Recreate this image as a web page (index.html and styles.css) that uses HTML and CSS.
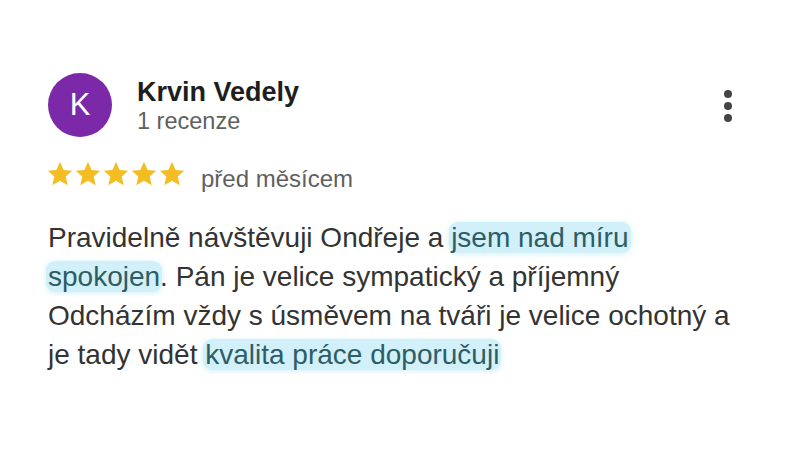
FILE: index.html
```html
<!DOCTYPE html>
<html lang="cs">
<head>
<meta charset="utf-8">
<link rel="stylesheet" href="styles.css">
</head>
<body>
<div class="review">
  <div class="header">
    <div class="avatar">K</div>
    <div class="who">
      <div class="name">Krvin Vedely</div>
      <div class="count">1 recenze</div>
    </div>
    <div class="more">
      <span class="dot"></span><span class="dot"></span><span class="dot"></span>
    </div>
  </div>
  <div class="meta">
    <div class="stars">
      <svg viewBox="0 0 24 24"><path d="M12 1.6l3.1 6.9 7.4.7-5.6 5 1.7 7.4L12 17.8l-6.6 3.8 1.7-7.4-5.6-5 7.4-.7z"/></svg>
      <svg viewBox="0 0 24 24"><path d="M12 1.6l3.1 6.9 7.4.7-5.6 5 1.7 7.4L12 17.8l-6.6 3.8 1.7-7.4-5.6-5 7.4-.7z"/></svg>
      <svg viewBox="0 0 24 24"><path d="M12 1.6l3.1 6.9 7.4.7-5.6 5 1.7 7.4L12 17.8l-6.6 3.8 1.7-7.4-5.6-5 7.4-.7z"/></svg>
      <svg viewBox="0 0 24 24"><path d="M12 1.6l3.1 6.9 7.4.7-5.6 5 1.7 7.4L12 17.8l-6.6 3.8 1.7-7.4-5.6-5 7.4-.7z"/></svg>
      <svg viewBox="0 0 24 24"><path d="M12 1.6l3.1 6.9 7.4.7-5.6 5 1.7 7.4L12 17.8l-6.6 3.8 1.7-7.4-5.6-5 7.4-.7z"/></svg>
    </div>
    <span class="when">před měsícem</span>
  </div>
  <p class="text">Pravidelně návštěvuji Ondřeje a <span class="hl">jsem nad míru spokojen</span>. Pán je velice sympatický a příjemný Odcházím vždy s úsměvem na tváři je velice ochotný a je tady vidět <span class="hl">kvalita práce doporučuji</span></p>
</div>
</body>
</html>
```
FILE: styles.css
```css
html, body {
  margin: 0;
  background: #ffffff;
}
body {
  font-family: "Liberation Sans", Arial, sans-serif;
  color: #333333;
}
.review {
  padding: 73px 48px 0 48px;
  width: 704px;
}
.header {
  display: flex;
  align-items: flex-start;
  gap: 25px;
}
.avatar {
  width: 64px;
  height: 64px;
  border-radius: 50%;
  background: #7b29a8;
  color: #ffffff;
  font-size: 31px;
  display: flex;
  align-items: center;
  justify-content: center;
  flex: none;
}
.who {
  flex: 1;
  padding-top: 4px;
}
.name {
  font-size: 27px;
  font-weight: bold;
  line-height: 30px;
  color: #1e1e1e;
}
.count {
  font-size: 23.5px;
  line-height: 28px;
  color: #5f5f5f;
}
.more {
  display: flex;
  flex-direction: column;
  gap: 4px;
  margin: 17px 20px 0 0;
}
.dot {
  width: 8px;
  height: 8px;
  border-radius: 50%;
  background: #454545;
}
.meta {
  display: flex;
  align-items: flex-start;
  margin-top: 22px;
}
.stars {
  display: flex;
  gap: 0;
  margin: 1px 0 0 -2px;
}
.stars svg {
  width: 28px;
  height: 28px;
  fill: #f4bd24;
}
.when {
  margin: 6px 0 0 15px;
  font-size: 24px;
  line-height: 28px;
  color: #5f5f5f;
}
.text {
  margin: 25px 0 0 0;
  font-size: 28px;
  line-height: 39px;
  color: #333333;
}
.hl {
  color: #2e5d66;
  background: rgba(190, 234, 246, 0.7);
  box-shadow: 0 1px 5px 1px rgba(190, 234, 246, 0.55);
  border-radius: 9px;
  padding: 0 2px;
  margin: 0 -2px;
  -webkit-box-decoration-break: clone;
  box-decoration-break: clone;
}
```
